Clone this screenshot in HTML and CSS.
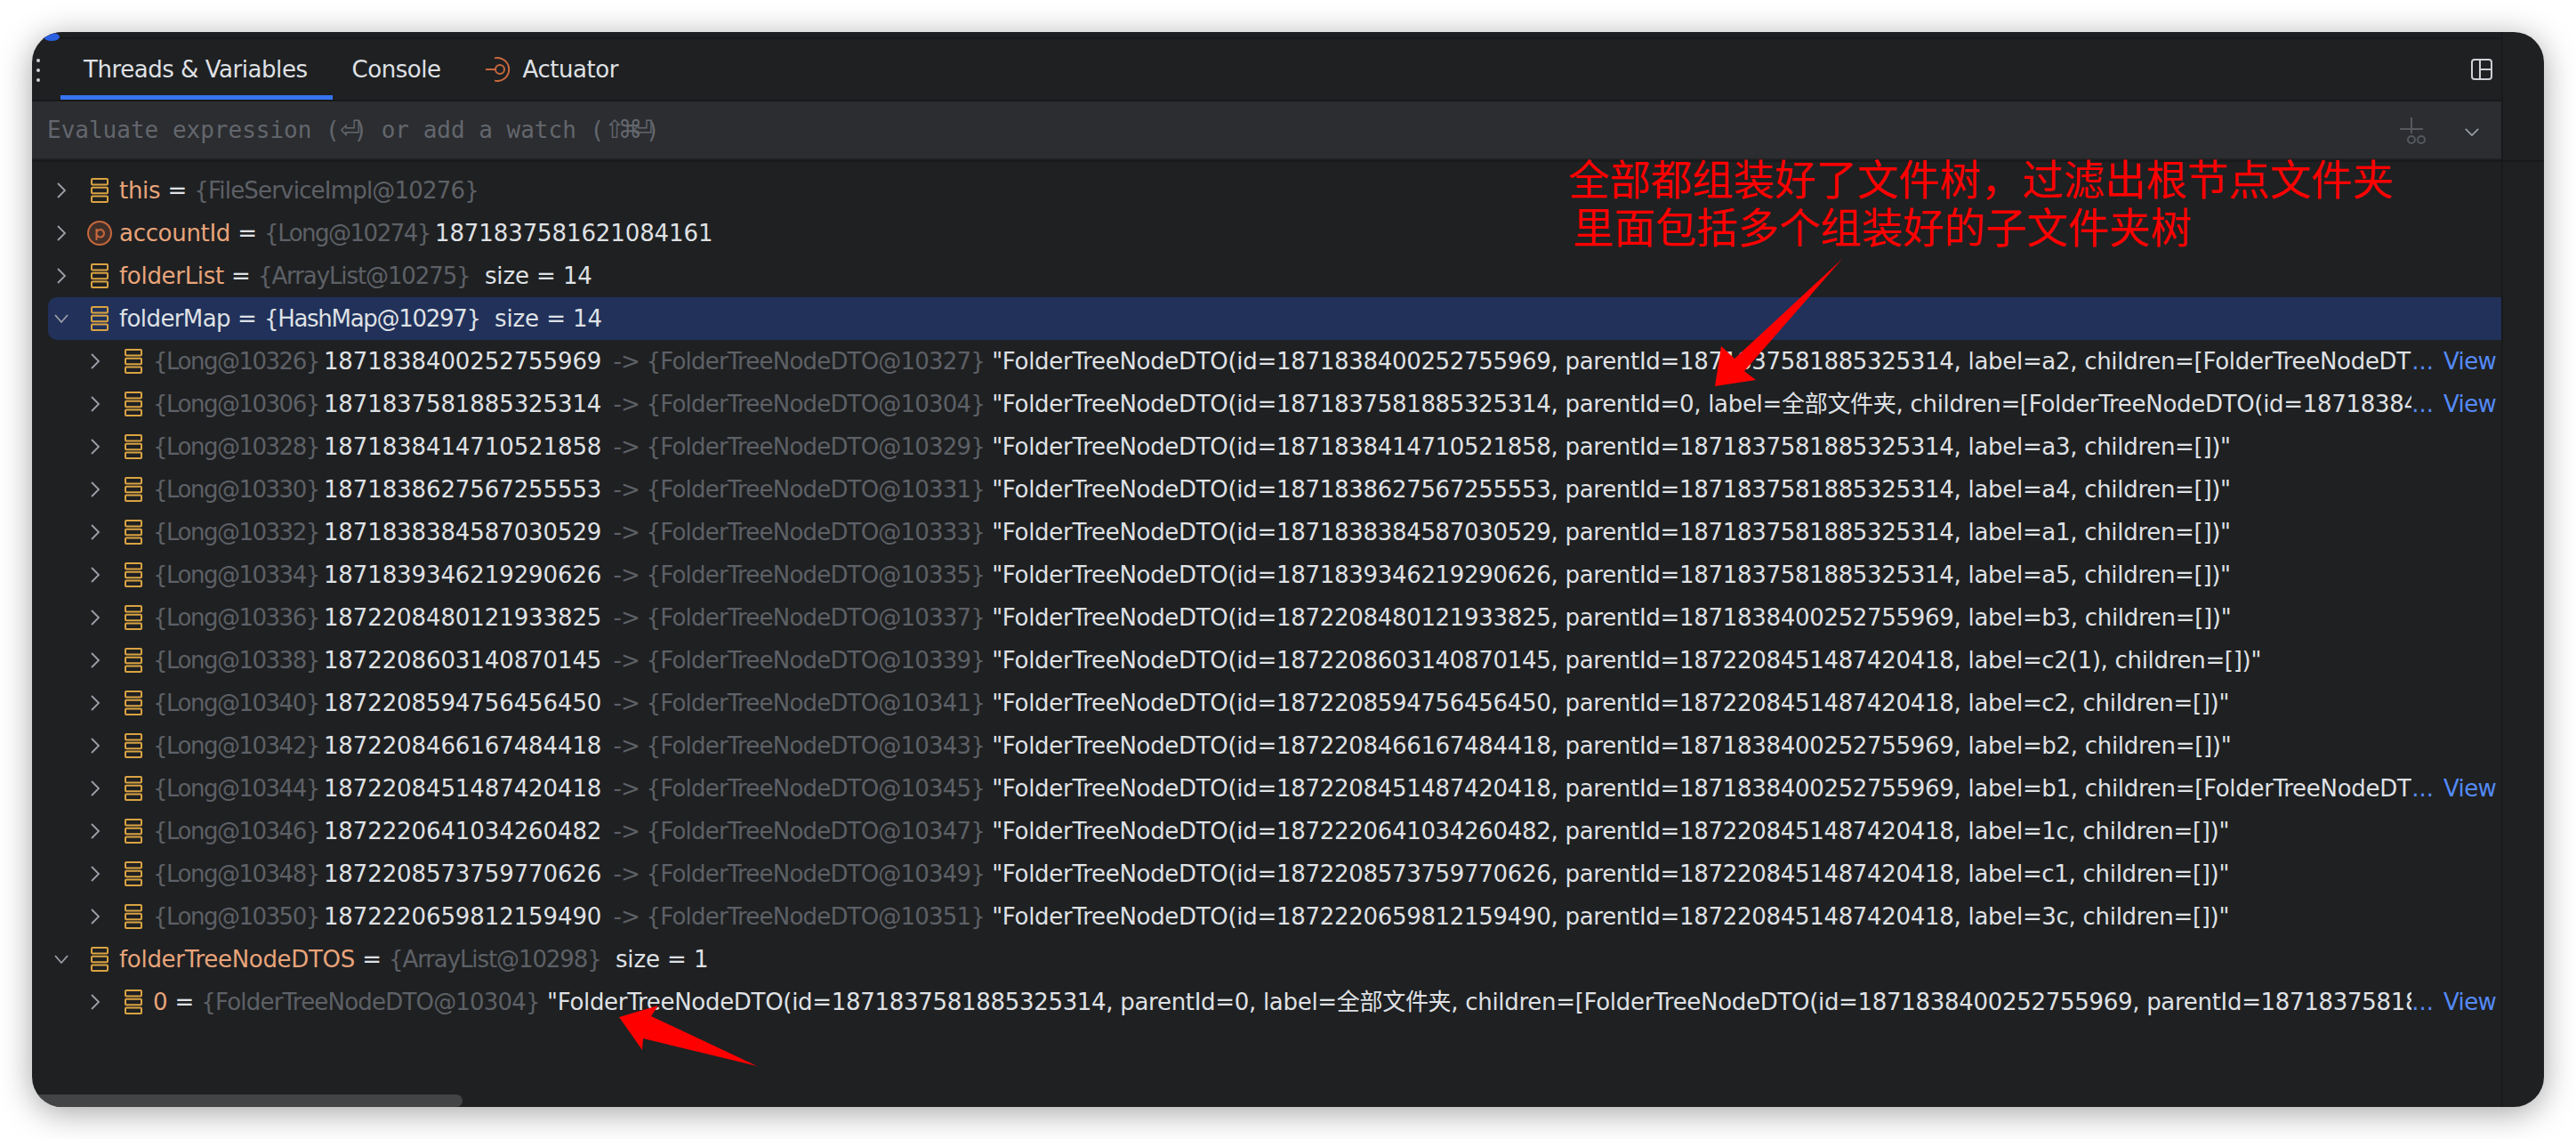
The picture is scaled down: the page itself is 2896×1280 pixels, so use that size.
FILE: index.html
```html
<!DOCTYPE html>
<html lang="en">
<head>
<meta charset="utf-8">
<title>Threads &amp; Variables</title>
<link rel="stylesheet" href="styles.css">
</head>
<body>
<svg width="0" height="0" class="defs">
  <symbol id="field" viewBox="0 0 20 28"><g fill="none" stroke="#d9a343" stroke-width="2"><rect x="1" y="1" width="18" height="6.5" rx="1"/><rect x="1" y="10.75" width="18" height="6.5" rx="1"/><rect x="1" y="20.5" width="18" height="6.5" rx="1"/></g></symbol>
  <symbol id="right" viewBox="0 0 12 20"><path d="M2 2l8 8-8 8" fill="none" stroke="#9da0a8" stroke-width="1.8"/></symbol>
  <symbol id="down" viewBox="0 0 20 12"><path d="M2 2l8 8 8-8" fill="none" stroke="#9da0a8" stroke-width="1.8"/></symbol>
</svg>
<main class="window">
  <span class="corner"></span>
  <div class="topline"></div>
  <header class="tabs">
    <span class="grip"><i></i><i></i><i></i></span>
    <span class="tab tab-active">Threads &amp; Variables</span>
    <span class="tab tab-console">Console</span>
    <span class="tab tab-act">
      <svg class="act-icon" width="31" height="28" viewBox="0 0 31 28"><g fill="none" stroke="#c7683d" stroke-width="2"><path d="M10 1.4A13 13 0 1 1 10 26.6"/><circle cx="16" cy="14" r="5"/><path d="M0 14h11"/></g></svg>
      Actuator
    </span>
    <svg class="layout-icon" width="24" height="24" viewBox="0 0 24 24"><g fill="none" stroke="#ced0d6" stroke-width="2"><rect x="1" y="1" width="22" height="22" rx="3"/><path d="M10 1v22M10 12h13"/></g></svg>
  </header>
  <div class="evalbar">
    <span class="placeholder">Evaluate expression (<span class="key">⏎</span>) or add a watch (<span class="key">⇧</span><span class="key">⌘</span><span class="key">⏎</span>)</span>
    <svg class="watch-icon" width="30" height="30" viewBox="0 0 30 30"><g fill="none" stroke="#55585e" stroke-width="2"><path d="M13 0v18M0 13h26"/><circle cx="13" cy="25" r="4"/><circle cx="24" cy="25" r="4"/></g></svg>
    <svg class="drop-icon" width="18" height="11" viewBox="0 0 20 12"><use href="#down"/></svg>
  </div>
  <section class="tree">
    <div class="row"><svg class="chev" width="12" height="20"><use href="#right"/></svg><svg class="ic" width="20" height="28"><use href="#field"/></svg><span class="val"><span class="name">this</span> <span class="eq">=</span> <span class="ref">{FileServiceImpl@10276}</span></span></div>
    <div class="row"><svg class="chev" width="12" height="20"><use href="#right"/></svg><svg class="ic-p" width="28" height="28" viewBox="0 0 28 28"><circle cx="14" cy="14" r="13" fill="#41302a" stroke="#c7683d" stroke-width="2"/><path d="M10.5 22V9M10.5 13.5a4.3 4.3 0 1 1 0 1.5" fill="none" stroke="#c7683d" stroke-width="2"/></svg><span class="val"><span class="name">accountId</span> <span class="eq">=</span> <span class="ref-s">{Long@10274}</span> 1871837581621084161</span></div>
    <div class="row"><svg class="chev" width="12" height="20"><use href="#right"/></svg><svg class="ic" width="20" height="28"><use href="#field"/></svg><span class="val"><span class="name">folderList</span> <span class="eq">=</span> <span class="ref-m">{ArrayList@10275}</span> &nbsp;size = 14</span></div>
    <div class="row row-sel"><svg class="chev" width="12" height="20"><path class="open" d="M-1 6l7 8 7-8"/></svg><svg class="ic" width="20" height="28"><use href="#field"/></svg><span class="val"><span class="sel-name">folderMap</span> = <span class="sel-ref">{HashMap@10297}</span> &nbsp;size = 14</span></div>

    <div class="row child"><svg class="chev" width="12" height="20"><use href="#right"/></svg><svg class="ic" width="20" height="28"><use href="#field"/></svg><span class="val"><span class="ref-s">{Long@10326}</span> 1871838400252755969 <span class="ref arrow">-&gt; {FolderTreeNodeDTO@10327}</span> <span class="str">"FolderTreeNodeDTO(id=1871838400252755969, parentId=1871837581885325314, label=a2, children=[FolderTreeNodeDTO(id=1872208451487420418, parentId=1871838400252755969</span></span><span class="more">...</span><span class="view">View</span></div>
    <div class="row child"><svg class="chev" width="12" height="20"><use href="#right"/></svg><svg class="ic" width="20" height="28"><use href="#field"/></svg><span class="val"><span class="ref-s">{Long@10306}</span> 1871837581885325314 <span class="ref arrow">-&gt; {FolderTreeNodeDTO@10304}</span> <span class="str">"FolderTreeNodeDTO(id=1871837581885325314, parentId=0, label=<span class="cjk">全部文件夹</span>, children=[FolderTreeNodeDTO(id=1871838400252755969, parentId=1871837581885325314, label=a2</span></span><span class="more">...</span><span class="view">View</span></div>
    <div class="row child"><svg class="chev" width="12" height="20"><use href="#right"/></svg><svg class="ic" width="20" height="28"><use href="#field"/></svg><span class="val"><span class="ref-s">{Long@10328}</span> 1871838414710521858 <span class="ref arrow">-&gt; {FolderTreeNodeDTO@10329}</span> <span class="str">"FolderTreeNodeDTO(id=1871838414710521858, parentId=1871837581885325314, label=a3, children=[])"</span></span></div>
    <div class="row child"><svg class="chev" width="12" height="20"><use href="#right"/></svg><svg class="ic" width="20" height="28"><use href="#field"/></svg><span class="val"><span class="ref-s">{Long@10330}</span> 1871838627567255553 <span class="ref arrow">-&gt; {FolderTreeNodeDTO@10331}</span> <span class="str">"FolderTreeNodeDTO(id=1871838627567255553, parentId=1871837581885325314, label=a4, children=[])"</span></span></div>
    <div class="row child"><svg class="chev" width="12" height="20"><use href="#right"/></svg><svg class="ic" width="20" height="28"><use href="#field"/></svg><span class="val"><span class="ref-s">{Long@10332}</span> 1871838384587030529 <span class="ref arrow">-&gt; {FolderTreeNodeDTO@10333}</span> <span class="str">"FolderTreeNodeDTO(id=1871838384587030529, parentId=1871837581885325314, label=a1, children=[])"</span></span></div>
    <div class="row child"><svg class="chev" width="12" height="20"><use href="#right"/></svg><svg class="ic" width="20" height="28"><use href="#field"/></svg><span class="val"><span class="ref-s">{Long@10334}</span> 1871839346219290626 <span class="ref arrow">-&gt; {FolderTreeNodeDTO@10335}</span> <span class="str">"FolderTreeNodeDTO(id=1871839346219290626, parentId=1871837581885325314, label=a5, children=[])"</span></span></div>
    <div class="row child"><svg class="chev" width="12" height="20"><use href="#right"/></svg><svg class="ic" width="20" height="28"><use href="#field"/></svg><span class="val"><span class="ref-s">{Long@10336}</span> 1872208480121933825 <span class="ref arrow">-&gt; {FolderTreeNodeDTO@10337}</span> <span class="str">"FolderTreeNodeDTO(id=1872208480121933825, parentId=1871838400252755969, label=b3, children=[])"</span></span></div>
    <div class="row child"><svg class="chev" width="12" height="20"><use href="#right"/></svg><svg class="ic" width="20" height="28"><use href="#field"/></svg><span class="val"><span class="ref-s">{Long@10338}</span> 1872208603140870145 <span class="ref arrow">-&gt; {FolderTreeNodeDTO@10339}</span> <span class="str">"FolderTreeNodeDTO(id=1872208603140870145, parentId=1872208451487420418, label=c2(1), children=[])"</span></span></div>
    <div class="row child"><svg class="chev" width="12" height="20"><use href="#right"/></svg><svg class="ic" width="20" height="28"><use href="#field"/></svg><span class="val"><span class="ref-s">{Long@10340}</span> 1872208594756456450 <span class="ref arrow">-&gt; {FolderTreeNodeDTO@10341}</span> <span class="str">"FolderTreeNodeDTO(id=1872208594756456450, parentId=1872208451487420418, label=c2, children=[])"</span></span></div>
    <div class="row child"><svg class="chev" width="12" height="20"><use href="#right"/></svg><svg class="ic" width="20" height="28"><use href="#field"/></svg><span class="val"><span class="ref-s">{Long@10342}</span> 1872208466167484418 <span class="ref arrow">-&gt; {FolderTreeNodeDTO@10343}</span> <span class="str">"FolderTreeNodeDTO(id=1872208466167484418, parentId=1871838400252755969, label=b2, children=[])"</span></span></div>
    <div class="row child"><svg class="chev" width="12" height="20"><use href="#right"/></svg><svg class="ic" width="20" height="28"><use href="#field"/></svg><span class="val"><span class="ref-s">{Long@10344}</span> 1872208451487420418 <span class="ref arrow">-&gt; {FolderTreeNodeDTO@10345}</span> <span class="str">"FolderTreeNodeDTO(id=1872208451487420418, parentId=1871838400252755969, label=b1, children=[FolderTreeNodeDTO(id=1872208594756456450, parentId=1872208451487420418</span></span><span class="more">...</span><span class="view">View</span></div>
    <div class="row child"><svg class="chev" width="12" height="20"><use href="#right"/></svg><svg class="ic" width="20" height="28"><use href="#field"/></svg><span class="val"><span class="ref-s">{Long@10346}</span> 1872220641034260482 <span class="ref arrow">-&gt; {FolderTreeNodeDTO@10347}</span> <span class="str">"FolderTreeNodeDTO(id=1872220641034260482, parentId=1872208451487420418, label=1c, children=[])"</span></span></div>
    <div class="row child"><svg class="chev" width="12" height="20"><use href="#right"/></svg><svg class="ic" width="20" height="28"><use href="#field"/></svg><span class="val"><span class="ref-s">{Long@10348}</span> 1872208573759770626 <span class="ref arrow">-&gt; {FolderTreeNodeDTO@10349}</span> <span class="str">"FolderTreeNodeDTO(id=1872208573759770626, parentId=1872208451487420418, label=c1, children=[])"</span></span></div>
    <div class="row child"><svg class="chev" width="12" height="20"><use href="#right"/></svg><svg class="ic" width="20" height="28"><use href="#field"/></svg><span class="val"><span class="ref-s">{Long@10350}</span> 1872220659812159490 <span class="ref arrow">-&gt; {FolderTreeNodeDTO@10351}</span> <span class="str">"FolderTreeNodeDTO(id=1872220659812159490, parentId=1872208451487420418, label=3c, children=[])"</span></span></div>

    <div class="row"><svg class="chev" width="12" height="20"><path class="open" d="M-1 6l7 8 7-8"/></svg><svg class="ic" width="20" height="28"><use href="#field"/></svg><span class="val"><span class="name">folderTreeNodeDTOS</span> <span class="eq">=</span> <span class="ref-m">{ArrayList@10298}</span> &nbsp;size = 1</span></div>
    <div class="row child"><svg class="chev" width="12" height="20"><use href="#right"/></svg><svg class="ic" width="20" height="28"><use href="#field"/></svg><span class="val"><span class="name">0</span> <span class="eq">=</span> <span class="ref">{FolderTreeNodeDTO@10304}</span> <span class="str">"FolderTreeNodeDTO(id=1871837581885325314, parentId=0, label=<span class="cjk">全部文件夹</span>, children=[FolderTreeNodeDTO(id=1871838400252755969, parentId=1871837581885325314, label=a2</span></span><span class="more">...</span><span class="view">View</span></div>
  </section>
  <div class="scrollbar"></div>
  <div class="railline"></div>
  <div class="note"><p class="note-a">全部都组装好了文件树，过滤出根节点文件夹</p><p class="note-b">里面包括多个组装好的子文件夹树</p></div>
  <svg class="arrows" width="2824" height="1208" viewBox="36 36 2824 1208"><polygon fill="#ff0000" points="2071,291 1961,417 1974,427 1928,434 1935,389 1950,403"/><polygon fill="#ff0000" points="851,1198 732,1142 740,1130 696,1143 722,1180 723,1167"/></svg>
</main>
</body>
</html>
```
FILE: styles.css
```css
* { box-sizing: border-box; }
html, body { margin: 0; background: #fff; }
body { width: 2896px; height: 1280px; padding: 36px; overflow: hidden; font-family: "DejaVu Sans", "Noto Sans CJK SC", sans-serif; }
.defs { position: absolute; }
.window { position: relative; width: 2824px; height: 1208px; background: #1f2022; border-radius: 34px; overflow: hidden; box-shadow: 0 6px 36px rgba(0, 0, 0, 0.36); }
.topline { height: 8px; border-bottom: 2px solid #18191b; margin-right: 47px; background: #1e1f22; }
.corner { position: absolute; left: 13px; top: 1px; width: 18px; height: 9px; border-radius: 50%; background: #2a5fe0; }
.tabs { position: relative; display: flex; align-items: center; height: 70px; padding-left: 32px; margin-right: 47px; font-size: 26px; letter-spacing: -0.45px; color: #dfe1e5; border-bottom: 2px solid #18191b; }
.tab { display: flex; align-items: center; height: 100%; padding: 0 28px 0 26px; }
.tab-active { box-shadow: inset 0 -5px 0 #3574f0; }
.tab-console { padding: 0 24px 0 22px; }
.tab-act { padding: 0; margin-left: 26px; gap: 11px; }
.grip { position: absolute; left: 5px; top: 22px; display: flex; flex-direction: column; gap: 7px; }
.grip i { display: block; width: 4px; height: 4px; border-radius: 50%; background: #ced0d6; }
.layout-icon { position: absolute; right: 11px; top: 22px; }
.evalbar { position: relative; display: flex; align-items: center; height: 64px; margin-right: 47px; padding-left: 17px; background: #2b2d30; }
.placeholder { font-family: "DejaVu Sans Mono", monospace; font-size: 26px; color: #63666d; white-space: nowrap; }
.key { display: inline-block; width: 15.65px; text-align: center; font-family: "DejaVu Sans", sans-serif; font-size: 28px; line-height: 0; }
.watch-icon { position: absolute; left: 2662px; top: 18px; }
.drop-icon { position: absolute; left: 2734px; top: 29px; }
.tree { margin-top: 2px; border-top: 2px solid #18191b; padding: 8px 48px 0 18px; font-size: 26px; color: #dfe1e5; }
.row { display: flex; align-items: center; height: 48px; padding-right: 6px; }
.row-sel { background: #21315a; border-radius: 10px 0 0 10px; }
.chev { flex: none; margin-left: 9px; width: 12px; overflow: visible; }
.open { fill: none; stroke: #9da0a8; stroke-width: 1.8; }
.ic { flex: none; margin-left: 27px; margin-right: 12px; }
.ic-p { flex: none; margin-left: 23px; margin-right: 8px; }
.child { padding-left: 38px; }
.val { flex: 1; min-width: 0; overflow: hidden; white-space: nowrap; line-height: 48px; letter-spacing: -0.1px; }
.name { color: #e8a47a; letter-spacing: -0.3px; }
.eq { color: #dfe1e5; }
.ref { color: #5d6066; letter-spacing: -0.8px; }
.ref-m { color: #5d6066; letter-spacing: -1.1px; }
.ref-s { color: #5d6066; letter-spacing: -1.5px; margin-right: -3px; }
.arrow { margin-left: 5px; }
.sel-name { letter-spacing: -0.6px; }
.sel-ref { letter-spacing: -1.3px; }
.str { letter-spacing: -0.3px; }
.cjk { font-family: "Noto Sans CJK SC", sans-serif; line-height: 0; }
.more { flex: none; color: #548af7; margin-right: 11px; }
.view { flex: none; color: #548af7; letter-spacing: -0.7px; }
.scrollbar { position: absolute; left: 0; bottom: 0; width: 484px; height: 14px; background: #434446; border-radius: 0 8px 8px 0; }
.railline { position: absolute; right: 46px; top: 0; bottom: 0; width: 2px; background: #18191b; }
.note { position: absolute; left: 1727px; top: 136px; color: #ff0000; font-family: "Noto Sans CJK SC", sans-serif; font-size: 46.4px; line-height: 54px; }
.note p { margin: 0; white-space: nowrap; }
.note-b { padding-left: 5px; }
.arrows { position: absolute; left: 0; top: 0; }
```
